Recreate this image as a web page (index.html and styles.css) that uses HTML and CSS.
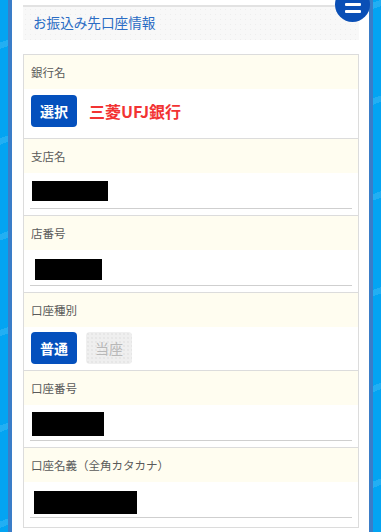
FILE: index.html
```html
<!DOCTYPE html>
<html lang="ja">
<head>
<meta charset="utf-8">
<title>お振込み先口座情報</title>
<link rel="stylesheet" href="styles.css">
</head>
<body>
<div class="frame">
  <div class="page">
    <div class="head">
      <h1 class="title">お振込み先口座情報</h1>
    </div>
    <div class="card">
      <div class="row">
        <div class="label">銀行名</div>
        <div class="bank">
          <button class="btn on">選択</button>
          <span class="bankname">三菱UFJ銀行</span>
        </div>
      </div>
      <div class="row">
        <div class="label">支店名</div>
        <div class="input"><span class="mask m1"></span></div>
      </div>
      <div class="row">
        <div class="label">店番号</div>
        <div class="input"><span class="mask m2"></span></div>
      </div>
      <div class="row">
        <div class="label">口座種別</div>
        <div class="choices">
          <button class="btn on">普通</button>
          <button class="btn off">当座</button>
        </div>
      </div>
      <div class="row">
        <div class="label">口座番号</div>
        <div class="input"><span class="mask m3"></span></div>
      </div>
      <div class="row">
        <div class="label">口座名義（全角カタカナ）</div>
        <div class="input last"><span class="mask m4"></span></div>
      </div>
    </div>
  </div>
  <div class="menu"><span class="bar"></span><span class="bar"></span><span class="bar"></span></div>
</div>
</body>
</html>
```
FILE: styles.css
```css
* { box-sizing: border-box; }
html, body { margin: 0; padding: 0; }
body {
  width: 381px;
  height: 532px;
  overflow: hidden;
  background-color: #03a4f2;
  background-image: repeating-linear-gradient(160deg, rgba(255,255,255,0) 0 40px, rgba(255,255,255,0.12) 40px 46px, rgba(255,255,255,0) 46px 90px);
  font-family: "Noto Sans CJK JP", "Noto Sans", sans-serif;
}
.frame {
  position: relative;
  margin: 0 8px 0 8px;
  height: 532px;
}
.page {
  height: 532px;
  background: #fff;
  border-left: 4px solid #3a7dc8;
  border-right: 4px solid #3a7dc8;
  padding: 5px 10px 0 11px;
}
.head {
  border-top: 2px solid #e2e2e2;
  height: 35px;
  background-color: #f8f8f8;
  background-image: radial-gradient(circle, #eeeeee 0.7px, transparent 1px);
  background-size: 5px 5px;
  display: flex;
  align-items: center;
  padding-left: 10px;
}
.title {
  margin: 0;
  font-size: 13.6px;
  font-weight: normal;
  color: #2a6cc4;
  line-height: 1;
  margin-top: -2px;
}
.card {
  margin-top: 14px;
  border: 1px solid #dcdcdc;
}
.row + .row { border-top: 1px solid #dcdcdc; }
.label {
  height: 34px;
  background: #fffdf0;
  display: flex;
  align-items: center;
  padding-left: 7px;
  font-size: 11.5px;
  color: #5a5a5a;
}
.bank {
  display: flex;
  align-items: center;
  gap: 12px;
  padding: 6px 7px 11px;
}
.btn {
  width: 46px;
  height: 32px;
  border: none;
  border-radius: 4px;
  font-family: inherit;
  font-size: 14px;
  font-weight: bold;
  padding: 0;
  line-height: 1;
}
.btn.on { background: #0450bd; color: #fff; }
.btn.off {
  background-color: #efefef;
  background-image: radial-gradient(circle, #e6e6e6 0.7px, transparent 1px);
  background-size: 4px 4px;
  color: #b8b8b8;
  font-weight: normal;
}
.bankname {
  color: #f23333;
  font-weight: bold;
  font-size: 16px;
}
.choices {
  display: flex;
  gap: 9px;
  padding: 5px 7px 6px;
}
.input {
  height: 36px;
  margin: 0 6px 6px 6px;
  border-bottom: 1px solid #cfcfcf;
  display: flex;
  align-items: center;
}
.input.last { margin-bottom: 9px; }
.mask { display: inline-block; background: #000; }
.m1 { width: 76px; height: 20px; margin-left: 2px; margin-top: 0; }
.m2 { width: 67px; height: 21px; margin-left: 5px; margin-top: 3px; }
.m3 { width: 72px; height: 24px; margin-left: 2px; margin-top: 2px; }
.m4 { width: 103px; height: 23px; margin-left: 4px; margin-top: 6px; }
.menu {
  position: absolute;
  left: 327px;
  top: -13px;
  width: 35px;
  height: 35px;
  border-radius: 50%;
  background: #0a4fb6;
  display: flex;
  flex-direction: column;
  align-items: center;
  justify-content: center;
  gap: 4px;
}
.bar {
  display: block;
  width: 16px;
  height: 3px;
  background: #fff;
  border-radius: 1px;
}
```
